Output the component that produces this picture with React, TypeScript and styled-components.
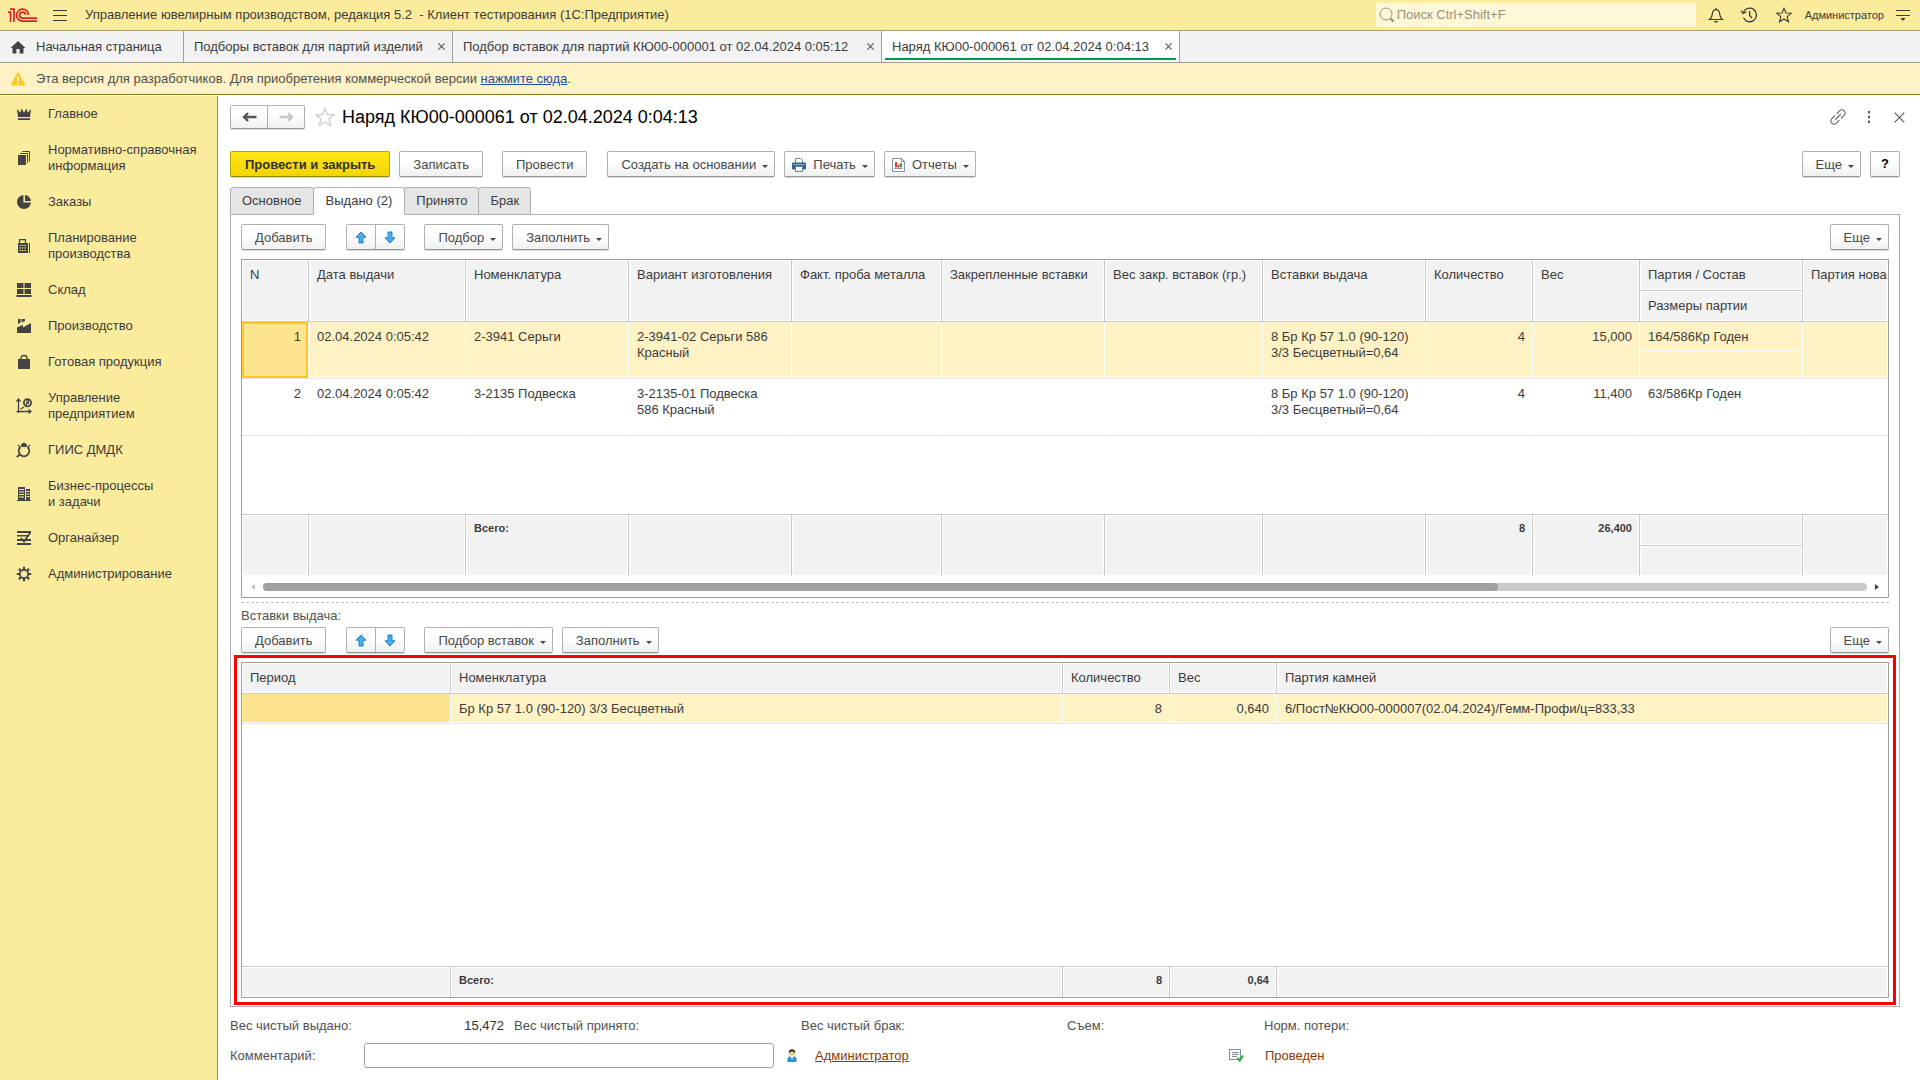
import React from "react";
import styled, { createGlobalStyle, css } from "styled-components";

const GlobalStyle = createGlobalStyle`
  *, *::before, *::after { box-sizing: border-box; }
  body {
    margin: 0;
    background: #fff;
    color: #3b3b3b;
    font: 13px/16px "Liberation Sans", Arial, sans-serif;
  }
  button, input { font: inherit; color: inherit; }
  svg { display: block; flex: none; }
`;

const yellow = "#fbec9d";
const softYellow = "#fff2c5";
const grey = "#f2f2f2";
const line = "#c8c8c8";

/* ---------- shell ---------- */

const Shell = styled.div`
  display: flex;
  flex-direction: column;
  height: 100vh;
`;

const TitleBar = styled.header`
  display: flex;
  align-items: center;
  height: 31px;
  padding: 0 7px 0 8px;
  background: ${yellow};
  border-bottom: 1px solid #aaa16b;
`;

const IconButton = styled.button<{ $w?: number }>`
  display: flex;
  align-items: center;
  justify-content: center;
  width: ${(p) => p.$w ?? 34}px;
  height: 24px;
  padding: 0;
  border: 0;
  background: none;
  flex: none;
`;

const AppTitle = styled.h1`
  flex: 1;
  margin: 0 0 0 3px;
  font-size: 13px;
  font-weight: normal;
  white-space: pre;
`;

const Search = styled.label`
  display: flex;
  align-items: center;
  gap: 2px;
  width: 320px;
  height: 24px;
  margin: 0 3px 0 0;
  padding: 0 3px;
  border-radius: 2px;
  background: #fff8d8;
  input {
    flex: 1;
    min-width: 0;
    padding: 0;
    border: 0;
    outline: 0;
    background: none;
  }
  input::placeholder { color: #97917a; opacity: 1; }
`;

const UserName = styled.button`
  padding: 0;
  margin: 0 9px 0 4px;
  border: 0;
  background: none;
  font-size: 11px;
`;

const WindowTabs = styled.nav`
  display: flex;
  height: 32px;
  background: ${grey};
  border-bottom: 1px solid #9d9d95;
`;

const WindowTab = styled.div<{ $active?: boolean; $w: number }>`
  position: relative;
  display: flex;
  align-items: center;
  justify-content: space-between;
  width: ${(p) => p.$w}px;
  padding: 0 0 0 10px;
  border-right: 1px solid #a0a0a0;
  background: ${(p) => (p.$active ? "#fff" : "none")};
  ${(p) =>
    p.$active &&
    css`
      &::after {
        content: "";
        position: absolute;
        left: 3px;
        right: 3px;
        bottom: 2px;
        height: 2px;
        background: #009a4e;
      }
    `}
`;

const TabLink = styled.button`
  display: flex;
  align-items: center;
  gap: 10px;
  padding: 0;
  border: 0;
  background: none;
  white-space: nowrap;
`;

const Notice = styled.p`
  display: flex;
  align-items: center;
  gap: 10px;
  height: 32px;
  margin: 0 0 1px;
  padding: 0 10px;
  background: ${softYellow};
  border-bottom: 1px solid #8f7320;
  color: #505050;
  a { color: #1a50a8; }
`;

const Body = styled.div`
  display: flex;
  flex: 1;
  min-height: 0;
`;

const Sidebar = styled.nav`
  width: 218px;
  flex: none;
  background: ${yellow};
  border-right: 1px solid #968c52;
`;

const SideItem = styled.a`
  display: flex;
  align-items: center;
  gap: 16px;
  padding: 10px 10px 10px 16px;
  color: #3b3b3b;
  text-decoration: none;
  white-space: pre-line;
`;

const Main = styled.main`
  display: flex;
  flex-direction: column;
  flex: 1;
  min-width: 0;
  padding: 9px 20px 12px 12px;
`;

/* ---------- form header ---------- */

const FormHead = styled.div`
  display: flex;
  align-items: center;
  height: 24px;
  margin-bottom: 22px;
`;

const FormTitle = styled.h2`
  flex: 1;
  margin: 0;
  color: #000;
  font-size: 18px;
  line-height: 24px;
  font-weight: normal;
`;

const HeadTools = styled.div`
  display: flex;
  margin-right: -14px;
`;

const raised = css`
  border: 1px solid #b0b0b0;
  border-bottom-color: #989898;
  border-radius: 2px;
  background: linear-gradient(#fff 40%, #f0f0f0);
  box-shadow: 0 1px 0 #d8d8d8;
`;

const Button = styled.button<{ $primary?: boolean; $menu?: boolean; $icon?: boolean; $after?: number }>`
  display: inline-flex;
  align-items: center;
  justify-content: center;
  gap: 6px;
  height: 26px;
  padding: ${(p) => (p.$icon ? "1px 6px 0 7px" : p.$menu ? "1px 6px 0 13px" : p.$primary ? "1px 14px 0" : "1px 13px 0")};
  margin-right: ${(p) => p.$after ?? 9}px;
  color: #484848;
  white-space: nowrap;
  ${raised}
  ${(p) =>
    p.$primary &&
    css`
      border-color: #bda600;
      border-bottom-color: #948200;
      background: linear-gradient(#ffe614, #f2d500);
      color: #303030;
      font-weight: bold;
    `}
  svg + span { margin: 0 0 0 1px; }
`;

const HelpButton = styled(Button)`
  width: 30px;
  padding: 0;
  margin: 0;
  color: #000;
  font-weight: bold;
`;

const Caret = styled.i`
  width: 0;
  height: 0;
  margin-top: 3px;
  border: solid transparent;
  border-width: 3px 3px 0;
  border-top-color: #444;
`;

const Pair = styled.div<{ $after: number; $h: number }>`
  display: flex;
  height: ${(p) => p.$h}px;
  margin-right: ${(p) => p.$after}px;
  ${raised}
  button {
    display: flex;
    align-items: center;
    justify-content: center;
    width: ${(p) => (p.$h === 24 ? 36 : 28)}px;
    padding: 0;
    border: 0;
    background: none;
  }
  button + button {
    border-left: 1px solid #b0b0b0;
    box-sizing: content-box;
  }
`;

const Toolbar = styled.div<{ $gap: number }>`
  display: flex;
  flex: none;
  margin-bottom: ${(p) => p.$gap}px;
`;

const Spring = styled.span`
  flex: 1;
`;

/* ---------- tabs and panel ---------- */

const PageTabs = styled.div`
  display: flex;
  flex: none;
  height: 28px;
  margin-bottom: -1px;
  position: relative;
`;

const PageTab = styled.button<{ $active?: boolean }>`
  padding: 0 ${(p) => (p.$active ? 12 : 11)}px;
  margin-right: -1px;
  border: 1px solid #b0b0b0;
  border-radius: 3px 3px 0 0;
  background: ${(p) => (p.$active ? "#fff" : "#e5e5e5")};
  border-bottom-color: ${(p) => (p.$active ? "#fff" : "#b0b0b0")};
`;

const Panel = styled.section`
  display: flex;
  flex-direction: column;
  flex: 1;
  min-height: 0;
  padding: 9px 10px 8px;
  border: 1px solid #b0b0b0;
`;

const TableBox = styled.div<{ $fill?: boolean }>`
  border: 1px solid #a0a0a0;
  overflow: hidden;
  ${(p) =>
    p.$fill
      ? css`
          flex: 1;
          min-height: 0;
          outline: 3px solid #f00;
          outline-offset: 4px;
        `
      : css`
          flex: none;
        `}
`;

const Table = styled.table<{ $fill?: boolean }>`
  width: 100%;
  height: ${(p) => (p.$fill ? "100%" : "auto")};
  table-layout: fixed;
  border-collapse: separate;
  border-spacing: 0;
`;

const cell = css<{ $right?: boolean }>`
  overflow: hidden;
  vertical-align: top;
  text-align: ${(p) => (p.$right ? "right" : "left")};
  font-weight: normal;
`;

const HeadCell = styled.th`
  ${cell}
  height: 31px;
  padding: 7px 7px 0 8px;
  background: ${grey};
  border-right: 1px solid ${line};
  border-bottom: 1px solid ${line};
  box-shadow: inset 0 0 0 1px #fff;
  white-space: nowrap;
  &:last-child:not([data-inner]) { border-right: 0; }
`;

const Cell = styled.td<{ $right?: boolean; $selected?: boolean; $current?: boolean; $focus?: boolean; $inner?: boolean; $h?: number }>`
  ${cell}
  height: ${(p) => p.$h ?? 30}px;
  padding: 7px ${(p) => (p.$right ? 7 : 9)}px 0 8px;
  border-right: 1px solid #fff;
  border-bottom: 1px solid ${(p) => (p.$inner ? "#fff" : "#e4e4e4")};
  background: ${(p) => (p.$current ? "#ffe48f" : p.$selected ? softYellow : "#fff")};
  box-shadow: inset 0 ${(p) => (p.$inner ? 0 : -1)}px 0 #fff;
  ${(p) => p.$focus && css`box-shadow: inset 0 0 0 2px #ffc720;`}
`;

const Filler = styled.td<{ $h?: number }>`
  height: ${(p) => (p.$h ? `${p.$h}px` : "auto")};
  padding: 0;
  border-bottom: 1px solid ${line};
`;

const FootCell = styled.td<{ $right?: boolean; $inner?: boolean }>`
  ${cell}
  height: ${(p) => (p.$inner ? 31 : 30)}px;
  padding: 5px 7px 0 8px;
  border-right: 1px solid ${line};
  ${(p) => p.$inner && css`border-bottom: 1px solid ${line};`}
  background: ${grey};
  box-shadow: inset 0 0 0 1px #fff;
  font-size: 11px;
  font-weight: bold;
  &:last-child:not([data-inner]) { border-right: 0; }
`;

const ScrollRow = styled.div`
  display: flex;
  align-items: center;
  gap: 8px;
  height: 21px;
  padding: 0 9px;
`;

const ScrollArrow = styled.i<{ $dir: "left" | "right" }>`
  border: solid transparent;
  border-width: ${(p) => (p.$dir === "left" ? "3px 4px 3px 0" : "3px 0 3px 4px")};
  border-${(p) => (p.$dir === "left" ? "right" : "left")}-color: ${(p) => (p.$dir === "left" ? "#c4c4c4" : "#444")};
`;

const Track = styled.div`
  flex: 1;
  height: 8px;
  border-radius: 4px;
  background: #c9c9c9;
`;

const Thumb = styled.div`
  width: 77%;
  height: 8px;
  border-radius: 4px;
  background: #a0a0a0;
`;

const Splitter = styled.hr`
  width: 100%;
  flex: none;
  margin: 4px 0 5px;
  border: 0;
  border-top: 1px dashed #c0c0c0;
`;

const Caption = styled.h3`
  margin: 0 0 3px;
  color: #505050;
  font-size: 13px;
  font-weight: normal;
`;

/* ---------- form footer ---------- */

const Totals = styled.dl`
  display: grid;
  grid-template-columns: 284px 287px 266px 197px 1fr;
  flex: none;
  margin: 11px 0 9px;
  color: #505050;
  div {
    display: flex;
    justify-content: space-between;
    padding-right: 10px;
  }
  dd { margin: 0; color: #303030; }
`;

const CommentRow = styled.div`
  display: flex;
  align-items: center;
  flex: none;
  color: #505050;
  label { width: 134px; }
  input {
    width: 410px;
    height: 25px;
    padding: 0 6px;
    border: 1px solid #a0a0a0;
    border-radius: 3px;
  }
`;

const Author = styled.div`
  display: flex;
  align-items: center;
  gap: 18px;
  width: 455px;
  padding-left: 13px;
  a { color: #8a3a00; }
`;

const Status = styled.span`
  display: flex;
  align-items: center;
  gap: 21px;
  color: #8a3a00;
`;

/* ---------- icons ---------- */

const Logo = () => (
  <svg width="30" height="16" viewBox="0 0 30 16" fill="none" stroke="#d9201f" strokeWidth="1.7">
    <path d="M0 5.2 H2.6 V15 M2 2.2 H6 V15" />
    <path d="M20.6 8 A6 6 0 1 0 14.6 14.2 H29" />
    <path d="M17.6 8 A3 3 0 1 0 14.6 11.1 H29" />
  </svg>
);
const Burger = () => (
  <svg width="14" height="12" viewBox="0 0 14 12" stroke="#3b3b3b" strokeWidth="1">
    <path d="M0 1.5H14M0 6.5H14M0 11.5H14" />
  </svg>
);
const SearchIcon = () => (
  <svg width="16" height="16" viewBox="0 0 16 16" fill="none" stroke="#97917a">
    <circle cx="7" cy="7" r="6" />
    <path d="M11.5 11.5 L14.5 14.5" strokeWidth="2.4" />
  </svg>
);
const Bell = () => (
  <svg width="16" height="16" viewBox="0 0 16 16" fill="none" stroke="#3b3b3b" strokeWidth="1.2">
    <path d="M1.5 12.5 H14.5 C12 11 12 9 11.6 6.5 C11.3 4 10 2.6 8 2.6 S4.7 4 4.4 6.5 C4 9 4 11 1.5 12.5 Z" />
    <path d="M8 1 V2.6" />
    <path d="M5.5 14 H10.5 L9 15.6 H7 Z" fill="#3b3b3b" stroke="none" />
  </svg>
);
const History = () => (
  <svg width="17" height="16" viewBox="0 0 17 16" fill="none" stroke="#3b3b3b" strokeWidth="1.3">
    <path d="M2.3 5.5 A6.8 6.8 0 1 1 2.5 10.8" />
    <path d="M0 3.5 L2 6.5 L5.2 5" />
    <path d="M8.6 4 V8.5 L11 11" />
  </svg>
);
const Star = ({ size = 16, color = "#3b3b3b" }: { size?: number; color?: string }) => (
  <svg width={size} height={size} viewBox="0 0 16 16" fill="none" stroke={color} strokeWidth="1.1">
    <path d="M8 1.2 L10 6 L15.2 6.3 L11.2 9.6 L12.5 14.8 L8 12 L3.5 14.8 L4.8 9.6 L0.8 6.3 L6 6 Z" />
  </svg>
);
const ServiceMenu = () => (
  <svg width="14" height="12" viewBox="0 0 14 12">
    <path d="M0 1.5H14M0 6.5H14" stroke="#3b3b3b" />
    <path d="M4.5 9H9.5L7 12Z" fill="#3b3b3b" />
  </svg>
);
const Home = () => (
  <svg width="16" height="14" viewBox="0 0 16 14" fill="#444">
    <path d="M8 1 L15.5 8 H13.5 V13.5 H9.6 V9 H6.4 V13.5 H2.5 V8 H0.5 Z" />
  </svg>
);
const Cross = ({ size = 7, color = "#555" }: { size?: number; color?: string }) => (
  <svg width={size} height={size} viewBox="0 0 8 8" stroke={color} strokeWidth={size > 8 ? 0.8 : 1.2}>
    <path d="M0.5 0.5 L7.5 7.5 M7.5 0.5 L0.5 7.5" />
  </svg>
);
const Warning = () => (
  <svg width="16" height="14" viewBox="0 0 16 14">
    <path d="M8 0.5 L15 13 H1 Z" fill="#fcc820" stroke="#fcc820" strokeLinejoin="round" />
    <path d="M8 4.5 V9 M8 10.5 V12" stroke="#fff" strokeWidth="1.6" />
  </svg>
);
const NavArrow = ({ right }: { right?: boolean }) => (
  <svg width="15" height="10" viewBox="0 0 15 10" fill="none" stroke={right ? "#c8c8c8" : "#555"} strokeWidth="2.4">
    <path d={right ? "M0.5 5 H13 M9 1 L13 5 L9 9" : "M14.5 5 H2 M6 1 L2 5 L6 9"} />
  </svg>
);
const LinkIcon = () => (
  <svg width="16" height="16" viewBox="0 0 16 16" fill="none" stroke="#666" strokeWidth="1.1" strokeLinecap="round">
    <path d="M5.5 10.5 L10.5 5.5" />
    <path d="M7 4.5 L9.6 1.9 A3.1 3.1 0 0 1 14.1 6.4 L11.5 9" />
    <path d="M9 11.5 L6.4 14.1 A3.1 3.1 0 0 1 1.9 9.6 L4.5 7" />
  </svg>
);
const Dots = () => (
  <svg width="4" height="12" viewBox="0 0 4 12" fill="#555">
    <rect x="1" y="0" width="2" height="2.4" />
    <rect x="1" y="4.8" width="2" height="2.4" />
    <rect x="1" y="9.6" width="2" height="2.4" />
  </svg>
);
const Arrow = ({ down }: { down?: boolean }) => (
  <svg width="12" height="13" viewBox="0 0 12 13">
    <path
      d={down ? "M6 12 L11 6.8 H8 V1 H4 V6.8 H1 Z" : "M6 1 L11 6.2 H8 V12 H4 V6.2 H1 Z"}
      fill="#45b0ef"
      stroke="#2d7fb5"
    />
  </svg>
);
const Printer = () => (
  <svg width="14" height="14" viewBox="0 0 14 14">
    <path d="M3.5 5 V0.5 H8.5 L10.5 2.5 V5" fill="#fff" stroke="#6b8299" />
    <rect x="0" y="4.5" width="14" height="7" rx="1.2" fill="#36608c" />
    <path d="M1.5 6.5 H12.5" stroke="#8fb0d0" />
    <rect x="3.5" y="8.5" width="7" height="5" fill="#fff" stroke="#6b8299" />
  </svg>
);
const Report = () => (
  <svg width="13" height="14" viewBox="0 0 13 14">
    <path d="M0.5 0.5 H9.5 L12.5 3.5 V13.5 H0.5 Z" fill="#fff" stroke="#8393ab" />
    <path d="M9.5 0.5 V3.5 H12.5" fill="none" stroke="#8393ab" />
    <path d="M4 4 V9.5 M6.5 6.5 V9.5" stroke="#e02020" strokeWidth="1.8" />
    <path d="M9 5 V9.5" stroke="#18a018" strokeWidth="1.8" />
    <path d="M2.5 10.5 H10.5" stroke="#8393ab" />
  </svg>
);
const Person = () => (
  <svg width="10" height="13" viewBox="0 0 10 13">
    <path d="M0.5 13 V10 Q0.5 7.5 3 7.5 H7 Q9.5 7.5 9.5 10 V13 Z" fill="#3390c8" />
    <path d="M3.5 7.3 L5 10.5 L6.5 7.3 Z" fill="#fff" />
    <circle cx="5" cy="4" r="2.9" fill="#f0c878" />
    <path d="M1.8 4.5 Q1.4 0.2 5 0.2 Q8.6 0.2 8.2 4.5 Q7 2.5 5 2.6 Q3 2.5 1.8 4.5 Z" fill="#333" />
  </svg>
);
const Posted = () => (
  <svg width="15" height="13" viewBox="0 0 15 13">
    <rect x="0.5" y="0.5" width="11" height="10" fill="#fff" stroke="#7f8ea6" />
    <path d="M3 3.5 H9.5 M3 5.5 H9.5 M3 7.5 H8" stroke="#7f8ea6" />
    <path d="M8.5 9 L10.7 11.5 L14 6.5" fill="none" stroke="#28b040" strokeWidth="2.2" />
  </svg>
);

const sideIcons: Record<string, React.ReactNode> = {
  crown: <path d="M1 3 L4.5 6.5 L5.5 2.5 L8 6.5 L10.5 2.5 L11.5 6.5 L15 3 L14 11 H2 Z M2 12.2 H14 V14 H2 Z" />,
  books: (
    <>
      <rect x="2" y="5" width="8" height="10" />
      <path d="M4 3.5 H11.5 V13 M6.5 1.5 H13.5 V11.5" fill="none" stroke="#444" />
    </>
  ),
  pie: <path d="M7.4 1 A7 7 0 1 0 15 8.6 H7.4 Z M9 1 A6.5 6.5 0 0 1 15 7 H9 Z" />,
  calc: (
    <>
      <path d="M3 1 H10 V5 H12 V15 H2 V5 H3 Z M4.2 2.3 V5 H8.8 V2.3 Z" fillRule="evenodd" />
      <path d="M3.5 7.5H10.5M3.5 10H10.5M3.5 12.5H10.5" stroke={yellow} strokeDasharray="1.4 1" />
      <path d="M13.5 5 V15" stroke="#444" />
    </>
  ),
  store: <path d="M1 1H7.5V6H1Z M8.5 1H15V6H8.5Z M1 7H7.5V12H1Z M8.5 7H15V12H8.5Z M0.5 13H15.5V15H0.5Z" />,
  factory: <path d="M1 9.5 L7 6.8 V9.5 L15 5 V15 H1 Z M2 1 H4.6 V4.6 L2 6 Z M5.6 1 H9 V3 L5.6 4.4 Z" />,
  bag: (
    <>
      <path d="M2 5 H14 V15 H2 Z" />
      <path d="M5 7 V4 Q5 1.5 8 1.5 T11 4 V7" fill="none" stroke="#444" strokeWidth="1.3" />
    </>
  ),
  chart: (
    <g fill="none" stroke="#444" strokeWidth="1.3">
      <path d="M2.5 15 V1.5 M0.5 3.5 L2.5 1 L4.5 3.5 M0.5 13.5 H14 M12.5 11.5 L15 13.5 L12.5 15.5 M4.5 11 L8 9" />
      <circle cx="11.5" cy="4.8" r="3.6" strokeWidth="1.8" />
      <path d="M10.5 3 H12.5 V5 H10.5 V7" />
    </g>
  ),
  ring: (
    <>
      <path d="M4.8 2.5 L8 0.5 L11.2 2.5 L10.5 5 H5.5 Z" />
      <path d="M4.5 5 A5.3 5.3 0 1 0 11.5 5 M4.5 12 L0.8 15" fill="none" stroke="#444" strokeWidth="1.7" />
      <path d="M2 3 L4 5 M14 3 L12 5" stroke="#444" strokeWidth="1.3" />
    </>
  ),
  process: (
    <>
      <path d="M2 1 H9 V14 H2 Z M10 3 H14 V14 H10 Z M1 14H15V15H1Z" />
      <path d="M3 3.5H8M3 6H8M3 8.5H8M3 11H8M10.5 5.5H13.5M10.5 8H13.5M10.5 10.5H13.5" stroke={yellow} />
    </>
  ),
  organizer: (
    <>
      <path d="M1 1H15V3H1Z M1 5H12V6.6H1Z M1 9H15V11H1Z M1 13H15V15H1Z" />
      <path d="M5 8 L8 11.5 L14.5 2.5" fill="none" stroke="#444" strokeWidth="1.8" />
    </>
  ),
  gear: (
    <g fill="none" stroke="#444">
      <circle cx="8" cy="8" r="4.2" strokeWidth="1.8" />
      <path d="M8 0.8V3.5M8 12.5V15.2M0.8 8H3.5M12.5 8H15.2M2.9 2.9L4.8 4.8M11.2 11.2L13.1 13.1M13.1 2.9L11.2 4.8M4.8 11.2L2.9 13.1" strokeWidth="2.2" />
    </g>
  ),
};

const SideIcon = ({ name }: { name: string }) => (
  <svg width="16" height="16" viewBox="0 0 16 16" fill="#444">
    {sideIcons[name]}
  </svg>
);

/* ---------- data ---------- */

const sections: [string, string][] = [
  ["crown", "Главное"],
  ["books", "Нормативно-справочная\nинформация"],
  ["pie", "Заказы"],
  ["calc", "Планирование\nпроизводства"],
  ["store", "Склад"],
  ["factory", "Производство"],
  ["bag", "Готовая продукция"],
  ["chart", "Управление\nпредприятием"],
  ["ring", "ГИИС ДМДК"],
  ["process", "Бизнес-процессы\nи задачи"],
  ["organizer", "Органайзер"],
  ["gear", "Администрирование"],
];

const openWindows: [string, number][] = [
  ["Подборы вставок для партий изделий", 269],
  ["Подбор вставок для партий КЮ00-000001 от 02.04.2024 0:05:12", 429],
  ["Наряд КЮ00-000061 от 02.04.2024 0:04:13", 298],
];

const issueColumns: [string, number][] = [
  ["N", 67],
  ["Дата выдачи", 157],
  ["Номенклатура", 163],
  ["Вариант изготовления", 163],
  ["Факт. проба металла", 150],
  ["Закрепленные вставки", 163],
  ["Вес закр. вставок (гр.)", 158],
  ["Вставки выдача", 163],
  ["Количество", 107],
  ["Вес", 107],
];

const issueRows = [
  ["1", "02.04.2024 0:05:42", "2-3941 Серьги", "2-3941-02 Серьги 586 Красный", "", "", "", "8 Бр Кр 57 1.0 (90-120) 3/3 Бесцветный=0,64", "4", "15,000", "164/586Кр Годен"],
  ["2", "02.04.2024 0:05:42", "3-2135 Подвеска", "3-2135-01 Подвеска 586 Красный", "", "", "", "8 Бр Кр 57 1.0 (90-120) 3/3 Бесцветный=0,64", "4", "11,400", "63/586Кр Годен"],
];

const issueTotals = ["", "", "Всего:", "", "", "", "", "", "8", "26,400"];
const numeric = [0, 8, 9];

/* ---------- parts ---------- */

const MenuButton = ({ label, after, icon }: { label: string; after?: number; icon?: React.ReactNode }) => (
  <Button type="button" aria-haspopup="menu" $menu $icon={!!icon} $after={after}>
    {icon}
    <span>{label}</span>
    <Caret />
  </Button>
);

const ListToolbar = ({ pick }: { pick: string }) => (
  <Toolbar $gap={9}>
    <Button type="button" $after={20}>Добавить</Button>
    <Pair $after={19} $h={26}>
      <button type="button" aria-label="Переместить вверх"><Arrow /></button>
      <button type="button" aria-label="Переместить вниз"><Arrow down /></button>
    </Pair>
    <MenuButton label={pick} />
    <MenuButton label="Заполнить" />
    <Spring />
    <MenuButton label="Еще" after={0} />
  </Toolbar>
);

const IssueTable = () => (
  <TableBox>
    <Table>
      <colgroup>
        {issueColumns.map(([name, width]) => (
          <col key={name} width={width} />
        ))}
        <col width={163} />
        <col />
      </colgroup>
      <thead>
        <tr>
          {issueColumns.map(([name]) => (
            <HeadCell key={name} rowSpan={2}>{name}</HeadCell>
          ))}
          <HeadCell>Партия / Состав</HeadCell>
          <HeadCell rowSpan={2}>Партия нова</HeadCell>
        </tr>
        <tr>
          <HeadCell data-inner>Размеры партии</HeadCell>
        </tr>
      </thead>
      <tbody>
        {issueRows.map((row, r) => (
          <React.Fragment key={row[0]}>
            <tr>
              {row.slice(0, 10).map((value, c) => (
                <Cell
                  key={c}
                  rowSpan={2}
                  $right={numeric.includes(c)}
                  $selected={r === 0}
                  $current={r === 0 && c === 0}
                  $focus={r === 0 && c === 0}
                >
                  {value}
                </Cell>
              ))}
              <Cell $h={29} $inner $selected={r === 0}>{row[10]}</Cell>
              <Cell rowSpan={2} $selected={r === 0} />
            </tr>
            <tr>
              <Cell $h={28} $selected={r === 0} />
            </tr>
          </React.Fragment>
        ))}
        <tr>
          <Filler colSpan={12} $h={79} />
        </tr>
      </tbody>
      <tfoot>
        <tr>
          {issueTotals.map((value, c) => (
            <FootCell key={c} rowSpan={2} $right={numeric.includes(c)}>{value}</FootCell>
          ))}
          <FootCell $inner />
          <FootCell rowSpan={2} />
        </tr>
        <tr>
          <FootCell data-inner />
        </tr>
      </tfoot>
    </Table>
    <ScrollRow>
      <ScrollArrow $dir="left" />
      <Track><Thumb /></Track>
      <ScrollArrow $dir="right" />
    </ScrollRow>
  </TableBox>
);

const InsertTable = () => (
  <TableBox $fill>
    <Table $fill>
      <colgroup>
        <col width={209} />
        <col width={612} />
        <col width={107} />
        <col width={107} />
        <col />
      </colgroup>
      <thead>
        <tr>
          <HeadCell>Период</HeadCell>
          <HeadCell>Номенклатура</HeadCell>
          <HeadCell>Количество</HeadCell>
          <HeadCell>Вес</HeadCell>
          <HeadCell>Партия камней</HeadCell>
        </tr>
      </thead>
      <tbody>
        <tr>
          <Cell $selected $current />
          <Cell $selected>Бр Кр 57 1.0 (90-120) 3/3 Бесцветный</Cell>
          <Cell $selected $right>8</Cell>
          <Cell $selected $right>0,640</Cell>
          <Cell $selected>6/Пост№КЮ00-000007(02.04.2024)/Гемм-Профи/ц=833,33</Cell>
        </tr>
        <tr>
          <Filler colSpan={5} />
        </tr>
      </tbody>
      <tfoot>
        <tr>
          <FootCell />
          <FootCell>Всего:</FootCell>
          <FootCell $right>8</FootCell>
          <FootCell $right>0,64</FootCell>
          <FootCell />
        </tr>
      </tfoot>
    </Table>
  </TableBox>
);

export default function App() {
  return (
    <Shell>
      <GlobalStyle />
      <TitleBar>
        <Logo />
        <IconButton type="button" aria-label="Главное меню" $w={44}><Burger /></IconButton>
        <AppTitle>{"Управление ювелирным производством, редакция 5.2  - Клиент тестирования (1С:Предприятие)"}</AppTitle>
        <Search>
          <SearchIcon />
          <input type="search" aria-label="Поиск" placeholder="Поиск Ctrl+Shift+F" />
        </Search>
        <IconButton type="button" aria-label="Оповещения"><Bell /></IconButton>
        <IconButton type="button" aria-label="История"><History /></IconButton>
        <IconButton type="button" aria-label="Избранное"><Star /></IconButton>
        <UserName type="button">Администратор</UserName>
        <IconButton type="button" aria-label="Сервис" $w={20}><ServiceMenu /></IconButton>
      </TitleBar>

      <WindowTabs>
        <WindowTab $w={184}>
          <TabLink type="button"><Home />Начальная страница</TabLink>
        </WindowTab>
        {openWindows.map(([name, width], i) => (
          <WindowTab key={name} $w={width} $active={i === 2}>
            <TabLink type="button">{name}</TabLink>
            <IconButton type="button" aria-label="Закрыть вкладку" $w={22}><Cross /></IconButton>
          </WindowTab>
        ))}
      </WindowTabs>

      <Notice>
        <Warning />
        <span>
          Эта версия для разработчиков. Для приобретения коммерческой версии <a href="#buy">нажмите сюда</a>.
        </span>
      </Notice>

      <Body>
        <Sidebar>
          {sections.map(([icon, name]) => (
            <SideItem key={icon} href={`#${icon}`}>
              <SideIcon name={icon} />
              <span>{name}</span>
            </SideItem>
          ))}
        </Sidebar>

        <Main>
          <FormHead>
            <Pair $after={3} $h={24}>
              <button type="button" aria-label="Назад"><NavArrow /></button>
              <button type="button" aria-label="Вперед"><NavArrow right /></button>
            </Pair>
            <IconButton type="button" aria-label="В избранное"><Star size={20} color="#d0d0d0" /></IconButton>
            <FormTitle>Наряд КЮ00-000061 от 02.04.2024 0:04:13</FormTitle>
            <HeadTools>
              <IconButton type="button" aria-label="Ссылка" $w={32}><LinkIcon /></IconButton>
              <IconButton type="button" aria-label="Действия" $w={30}><Dots /></IconButton>
              <IconButton type="button" aria-label="Закрыть" $w={30}><Cross size={11} /></IconButton>
            </HeadTools>
          </FormHead>

          <Toolbar $gap={10}>
            <Button type="button" $primary>Провести и закрыть</Button>
            <Button type="button" $after={19}>Записать</Button>
            <Button type="button" $after={20}>Провести</Button>
            <MenuButton label="Создать на основании" />
            <MenuButton label="Печать" icon={<Printer />} />
            <MenuButton label="Отчеты" icon={<Report />} />
            <Spring />
            <MenuButton label="Еще" />
            <HelpButton type="button" aria-label="Справка">?</HelpButton>
          </Toolbar>

          <PageTabs role="tablist">
            <PageTab type="button" role="tab">Основное</PageTab>
            <PageTab type="button" role="tab" aria-selected $active>Выдано (2)</PageTab>
            <PageTab type="button" role="tab">Принято</PageTab>
            <PageTab type="button" role="tab">Брак</PageTab>
          </PageTabs>

          <Panel>
            <ListToolbar pick="Подбор" />
            <IssueTable />
            <Splitter />
            <Caption>Вставки выдача:</Caption>
            <ListToolbar pick="Подбор вставок" />
            <InsertTable />
          </Panel>

          <Totals>
            <div><dt>Вес чистый выдано:</dt><dd>15,472</dd></div>
            <div><dt>Вес чистый принято:</dt></div>
            <div><dt>Вес чистый брак:</dt></div>
            <div><dt>Съем:</dt></div>
            <div><dt>Норм. потери:</dt></div>
          </Totals>

          <CommentRow>
            <label htmlFor="comment">Комментарий:</label>
            <input id="comment" type="text" />
            <Author>
              <Person />
              <a href="#author">Администратор</a>
            </Author>
            <Status><Posted />Проведен</Status>
          </CommentRow>
        </Main>
      </Body>
    </Shell>
  );
}
